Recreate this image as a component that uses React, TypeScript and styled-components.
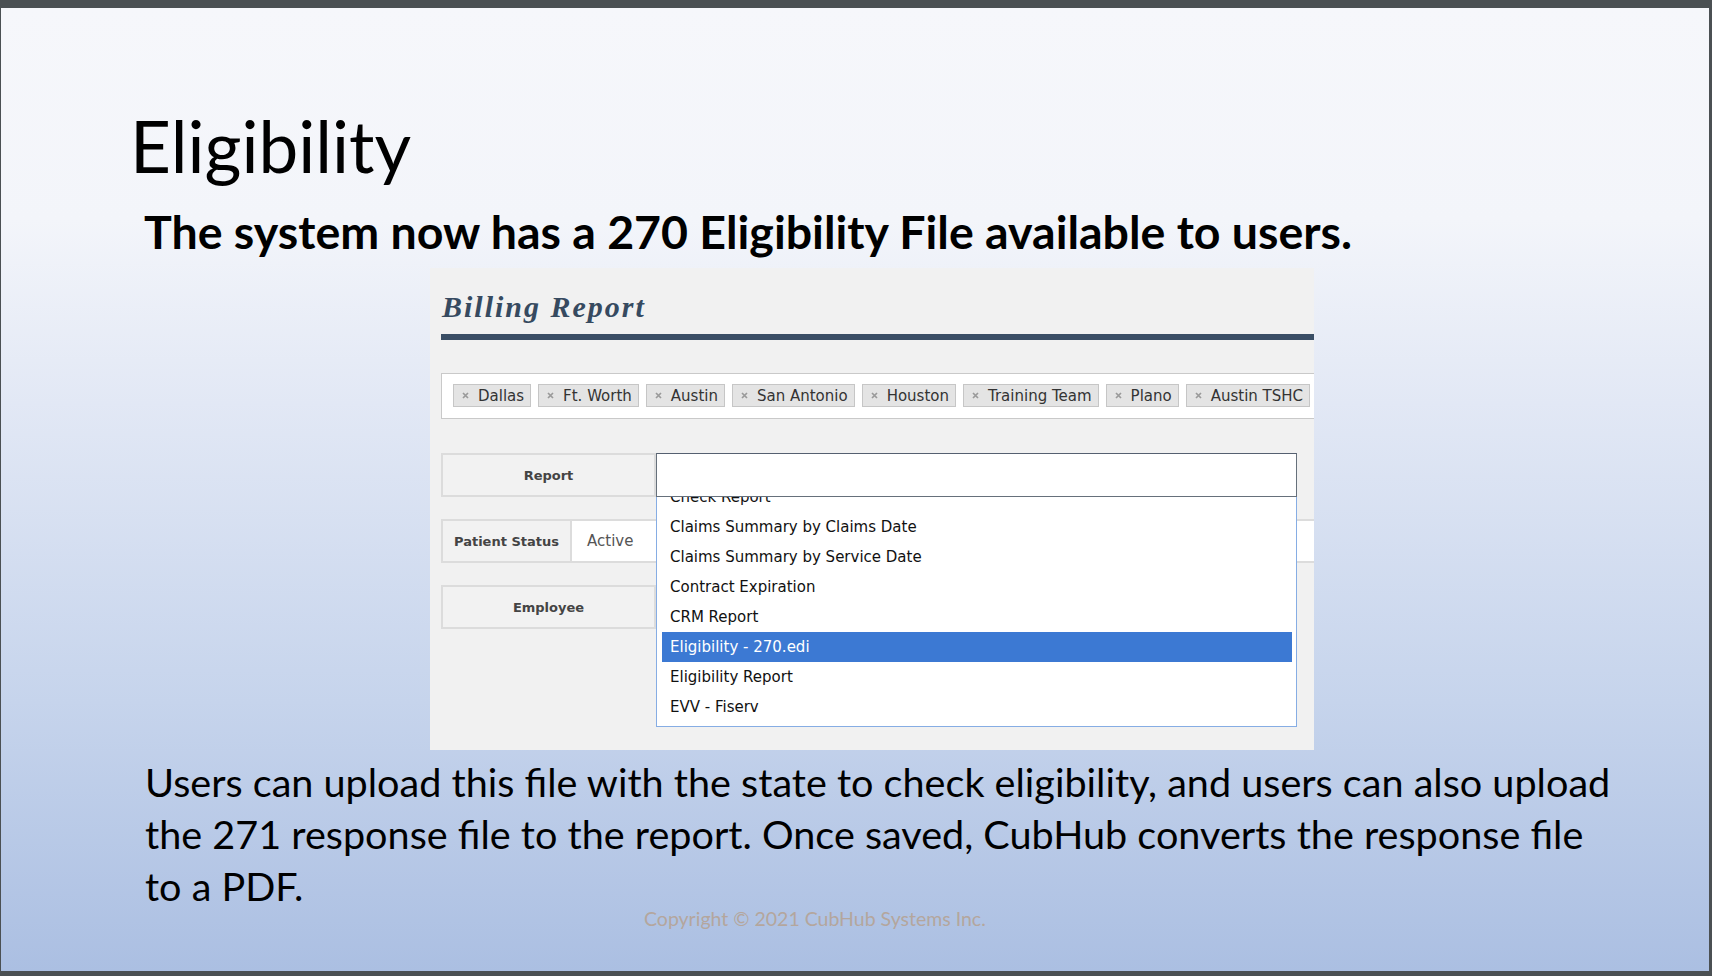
import React from 'react'
import styled, { createGlobalStyle } from 'styled-components'

const GlobalStyle = createGlobalStyle`
	html, body {
		margin: 0;
		padding: 0;
		background: #4b5053;
	}
	* {
		box-sizing: border-box;
	}
`

const Frame = styled.div`
	width: 1712px;
	height: 976px;
	padding: 8px 3px 5px 1px;
	background: #4b5053;
`

const Slide = styled.div`
	height: 100%;
	display: flex;
	flex-direction: column;
	font-family: Lato, 'Open Sans', sans-serif;
	color: #000;
	background: linear-gradient(
		180deg,
		#f6f7fb 0%,
		#f3f5fa 22%,
		#e2e8f5 41%,
		#c6d4ec 72%,
		#abbfe2 100%
	);
`

const Title = styled.h1`
	margin: 98px 0 0 129px;
	font-size: 71px;
	line-height: 80px;
	font-weight: 400;
`

const Subtitle = styled.h2`
	margin: 17px 0 0 143px;
	font-size: 46.5px;
	line-height: 56px;
	font-weight: 700;
	white-space: nowrap;
`

const Body = styled.p`
	margin: 6px 0 0 144px;
	font-size: 39.6px;
	line-height: 52px;
	white-space: nowrap;
`

const Copyright = styled.div`
	margin: -5px 0 0 643px;
	font-size: 19.5px;
	line-height: 24px;
	color: #b4a69d;
`

/* screenshot of the billing report page */

const Panel = styled.div`
	margin: 9px 0 0 429px;
	width: 884px;
	height: 482px;
	padding: 21px 0 0 11px;
	background: #f1f1f1;
	overflow: hidden;
	font-family: 'DejaVu Sans', Verdana, sans-serif;
`

const PanelTitle = styled.div`
	font-family: 'Liberation Serif', 'Times New Roman', serif;
	font-size: 30px;
	line-height: 36px;
	font-weight: 700;
	font-style: italic;
	letter-spacing: 2px;
	color: #364a60;
	padding-left: 1px;
`

const Rule = styled.div`
	margin-top: 9px;
	height: 6px;
	background: #3a4e65;
`

const TagBox = styled.div`
	margin-top: 33px;
	width: 900px;
	height: 46px;
	padding: 10px 11px;
	display: flex;
	gap: 7px;
	background: #fff;
	border: 1px solid #c9c9c9;
`

const Tag = styled.div`
	height: 23px;
	display: flex;
	align-items: center;
	padding: 0 6px 0 8px;
	background: #e4e4e4;
	border: 1px solid #c6c6c6;
	font-size: 15px;
	color: #333;
	white-space: nowrap;
`

const TagX = styled.svg`
	width: 7px;
	height: 7px;
	margin-right: 9px;
	flex: none;
`

const Form = styled.div`
	margin-top: 34px;
	width: 900px;
	display: flex;
	flex-direction: column;
	gap: 22px;
`

const Row = styled.div<{ $top?: boolean }>`
	position: relative;
	display: flex;
	height: 44px;
	z-index: ${(p) => (p.$top ? 2 : 1)};
`

const Label = styled.div<{ $w: number }>`
	width: ${(p) => p.$w}px;
	flex: none;
	display: flex;
	align-items: center;
	justify-content: center;
	background: #f2f2f2;
	border: 2px solid #dcdcdc;
	font-size: 13px;
	font-weight: 700;
	color: #444;
`

const Value = styled.div`
	flex: 1;
	display: flex;
	align-items: center;
	padding-left: 15px;
	background: #fff;
	border-top: 2px solid #dcdcdc;
	border-bottom: 2px solid #dcdcdc;
	font-size: 15px;
	color: #555;
`

const SelectBox = styled.div`
	width: 641px;
	background: #fff;
	border: 1px solid #66707b;
	border-top-color: #556070;
`

const Menu = styled.div`
	position: absolute;
	top: 44px;
	left: 215px;
	width: 641px;
	height: 230px;
	overflow: hidden;
	background: #fff;
	border: 1px solid #86ade4;
	border-top: none;
`

const MenuList = styled.div`
	margin-top: -15px;
	padding: 0 4px 0 5px;
`

const Option = styled.div<{ $active?: boolean }>`
	height: 30px;
	line-height: 30px;
	padding-left: 8px;
	font-size: 15px;
	white-space: nowrap;
	color: ${(p) => (p.$active ? '#fff' : '#111')};
	background: ${(p) => (p.$active ? '#3c79d3' : 'transparent')};
`

const locations = [
	'Dallas',
	'Ft. Worth',
	'Austin',
	'San Antonio',
	'Houston',
	'Training Team',
	'Plano',
	'Austin TSHC',
]

const reports = [
	'Check Report',
	'Claims Summary by Claims Date',
	'Claims Summary by Service Date',
	'Contract Expiration',
	'CRM Report',
	'Eligibility - 270.edi',
	'Eligibility Report',
	'EVV - Fiserv',
]

const BillingReport = () => (
	<Panel>
		<PanelTitle>Billing Report</PanelTitle>
		<Rule />
		<TagBox>
			{locations.map((loc) => (
				<Tag key={loc}>
					<TagX viewBox="0 0 7 7">
						<path d="M1 1 L6 6 M6 1 L1 6" stroke="#9a9a9a" strokeWidth="1.7" />
					</TagX>
					{loc}
				</Tag>
			))}
		</TagBox>
		<Form>
			<Row $top>
				<Label $w={215}>Report</Label>
				<SelectBox />
				<Menu>
					<MenuList>
						{reports.map((r) => (
							<Option key={r} $active={r === 'Eligibility - 270.edi'}>
								{r}
							</Option>
						))}
					</MenuList>
				</Menu>
			</Row>
			<Row>
				<Label $w={131}>Patient Status</Label>
				<Value>Active</Value>
			</Row>
			<Row>
				<Label $w={215}>Employee</Label>
			</Row>
		</Form>
	</Panel>
)

export default function App() {
	return (
		<>
			<GlobalStyle />
			<Frame>
				<Slide>
					<Title>Eligibility</Title>
					<Subtitle>The system now has a 270 Eligibility File available to users.</Subtitle>
					<BillingReport />
					<Body>
						Users can upload this file with the state to check eligibility, and users can also upload
						<br />
						the 271 response file to the report. Once saved, CubHub converts the response file
						<br />
						to a PDF.
					</Body>
					<Copyright>Copyright © 2021 CubHub Systems Inc.</Copyright>
				</Slide>
			</Frame>
		</>
	)
}
